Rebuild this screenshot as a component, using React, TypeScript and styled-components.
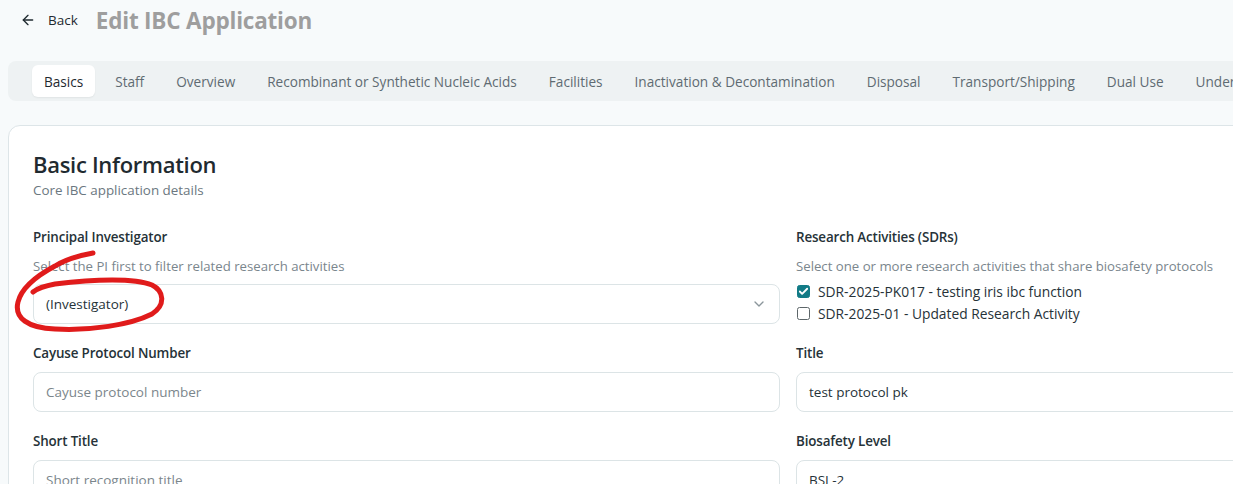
import React from "react";
import styled, { createGlobalStyle } from "styled-components";

const GlobalStyle = createGlobalStyle`
  html, body {
    margin: 0;
    padding: 0;
    background: #f7fafb;
    overflow: hidden;
  }
  body {
    font-family: "Open Sans", "Noto Sans", sans-serif;
    color: #263238;
    -webkit-font-smoothing: antialiased;
  }
  * { box-sizing: border-box; }
`;

const Page = styled.div`
  position: relative;
  width: 1600px;
  padding: 0 0 0 8px;
`;

const Header = styled.header`
  display: flex;
  align-items: center;
  height: 40px;
  padding-left: 4px;
  gap: 10px;
`;

const BackButton = styled.button`
  display: flex;
  align-items: center;
  gap: 12px;
  border: none;
  background: transparent;
  padding: 6px 8px;
  font-family: inherit;
  font-size: 13.5px;
  font-weight: 500;
  color: #1f2a30;
  cursor: pointer;
`;

const PageTitle = styled.h1`
  margin: 0;
  font-size: 22.5px;
  font-weight: 700;
  color: #9e9e9e;
  letter-spacing: -0.2px;
`;

const TabBar = styled.nav`
  margin-top: 21px;
  height: 40px;
  background: #eef2f3;
  border-radius: 8px;
  display: flex;
  align-items: center;
  padding: 4px 0 4px 24px;
  gap: 8px;
  white-space: nowrap;
  overflow: hidden;
`;

const Tab = styled.div<{ $active?: boolean }>`
  height: 32px;
  display: flex;
  align-items: center;
  padding: 0 12px;
  border-radius: 6px;
  font-size: 13.6px;
  font-weight: 500;
  color: ${(p) => (p.$active ? "#1f2a30" : "#5f6b72")};
  background: ${(p) => (p.$active ? "#ffffff" : "transparent")};
  box-shadow: ${(p) => (p.$active ? "0 1px 2px rgba(0,0,0,0.06)" : "none")};
`;

const Card = styled.section`
  margin-top: 24px;
  width: 1560px;
  background: #ffffff;
  border: 1px solid #dde5e8;
  border-radius: 12px;
  padding: 24px;
`;

const CardTitle = styled.h2`
  margin: 0;
  font-size: 22px;
  line-height: 28px;
  font-weight: 600;
  color: #1f2a30;
  letter-spacing: -0.3px;
`;

const CardSubtitle = styled.p`
  margin: 2px 0 0;
  font-size: 13.4px;
  line-height: 20px;
  color: #6b7780;
`;

const FormGrid = styled.div`
  margin-top: 27px;
  display: grid;
  grid-template-columns: 747px 747px;
  column-gap: 16px;
  row-gap: 19px;
`;

const Field = styled.div`
  display: flex;
  flex-direction: column;
`;

const Label = styled.label`
  font-size: 13.4px;
  line-height: 20px;
  font-weight: 600;
  color: #263238;
  margin-bottom: 9px;
  letter-spacing: -0.15px;
`;

const Hint = styled.p`
  margin: 0 0 8px;
  font-size: 13.2px;
  line-height: 20px;
  color: #7a868d;
`;

const Control = styled.div<{ $placeholder?: boolean }>`
  position: relative;
  height: 40px;
  border: 1px solid #dce4e6;
  border-radius: 8px;
  background: #ffffff;
  display: flex;
  align-items: center;
  justify-content: space-between;
  padding: 0 12px;
  font-size: 13.5px;
  color: ${(p) => (p.$placeholder ? "#7b868c" : "#263238")};
`;

const CheckList = styled.div`
  display: flex;
  flex-direction: column;
  gap: 2px;
  margin-top: -3px;
`;

const CheckRow = styled.div`
  display: flex;
  align-items: center;
  gap: 8px;
  height: 20px;
  font-size: 13.8px;
  font-weight: 500;
  color: #263238;
  padding-left: 1px;
`;

const Box = styled.span<{ $checked?: boolean }>`
  width: 13px;
  height: 13px;
  border-radius: 2.5px;
  border: 1px solid ${(p) => (p.$checked ? "#127b86" : "#5d6669")};
  background: ${(p) => (p.$checked ? "#127b86" : "#ffffff")};
  display: flex;
  align-items: center;
  justify-content: center;
`;

const Annotation = styled.svg`
  position: absolute;
  left: 0;
  top: 0;
  pointer-events: none;
`;

const tabs = [
  "Basics",
  "Staff",
  "Overview",
  "Recombinant or Synthetic Nucleic Acids",
  "Facilities",
  "Inactivation & Decontamination",
  "Disposal",
  "Transport/Shipping",
  "Dual Use",
  "Under",
];

const ArrowLeft = () => (
  <svg width="16" height="16" viewBox="0 0 24 24" fill="none" stroke="#1f2a30" strokeWidth="2" strokeLinecap="round" strokeLinejoin="round">
    <path d="m12 19-7-7 7-7" />
    <path d="M19 12H5" />
  </svg>
);

const Chevron = () => (
  <svg width="16" height="16" viewBox="0 0 24 24" fill="none" stroke="#8b969b" strokeWidth="2" strokeLinecap="round" strokeLinejoin="round">
    <path d="m6 9 6 6 6-6" />
  </svg>
);

const Check = () => (
  <svg width="11" height="11" viewBox="0 0 24 24" fill="none" stroke="#ffffff" strokeWidth="4" strokeLinecap="round" strokeLinejoin="round">
    <path d="M20 6 9 17l-5-5" />
  </svg>
);

const ExtIcon = () => (
  <svg width="10" height="14" viewBox="0 0 10 14" style={{ marginTop: 26 }}>
    <rect x="0" y="0" width="3" height="14" fill="#1b6f86" />
    <rect x="4" y="3" width="2" height="2" fill="#1b6f86" />
    <rect x="7" y="4" width="3" height="10" fill="#1b6f86" />
  </svg>
);

export default function App() {
  return (
    <>
      <GlobalStyle />
      <Page>
        <Header>
          <BackButton>
            <ArrowLeft />
            Back
          </BackButton>
          <PageTitle>Edit IBC Application</PageTitle>
        </Header>
        <TabBar>
          {tabs.map((t, i) => (
            <Tab key={t} $active={i === 0}>
              {t}
            </Tab>
          ))}
        </TabBar>
        <Card>
          <CardTitle>Basic Information</CardTitle>
          <CardSubtitle>Core IBC application details</CardSubtitle>
          <FormGrid>
            <Field>
              <Label>Principal Investigator</Label>
              <Hint>Select the PI first to filter related research activities</Hint>
              <Control>
                <span>(Investigator)</span>
                <Chevron />
              </Control>
            </Field>
            <Field>
              <Label>Research Activities (SDRs)</Label>
              <Hint>Select one or more research activities that share biosafety protocols</Hint>
              <CheckList>
                <CheckRow>
                  <Box $checked>
                    <Check />
                  </Box>
                  SDR-2025-PK017 - testing iris ibc function
                </CheckRow>
                <CheckRow>
                  <Box />
                  SDR-2025-01 - Updated Research Activity
                </CheckRow>
              </CheckList>
            </Field>
            <Field>
              <Label>Cayuse Protocol Number</Label>
              <Control $placeholder>Cayuse protocol number</Control>
            </Field>
            <Field>
              <Label>Title</Label>
              <Control>test protocol pk</Control>
            </Field>
            <Field>
              <Label>Short Title</Label>
              <Control $placeholder>
                <span>Short recognition title</span>
                <ExtIcon />
              </Control>
            </Field>
            <Field>
              <Label>Biosafety Level</Label>
              <Control>BSL-2</Control>
            </Field>
          </FormGrid>
        </Card>
        <Annotation width="200" height="340" viewBox="0 0 200 340">
          <path
            d="M93 253 C 82 255, 66 259, 55 266 C 40 274, 22 286, 18 302 C 14 318, 28 328, 55 329 C 90 331, 130 325, 152 314 C 166 305, 164 291, 152 285 C 135 278, 95 279, 55 284 C 44 286, 38 288, 33 292"
            fill="none"
            stroke="#e01b1b"
            strokeWidth="5"
            strokeLinecap="round"
            strokeLinejoin="round"
          />
        </Annotation>
      </Page>
    </>
  );
}
